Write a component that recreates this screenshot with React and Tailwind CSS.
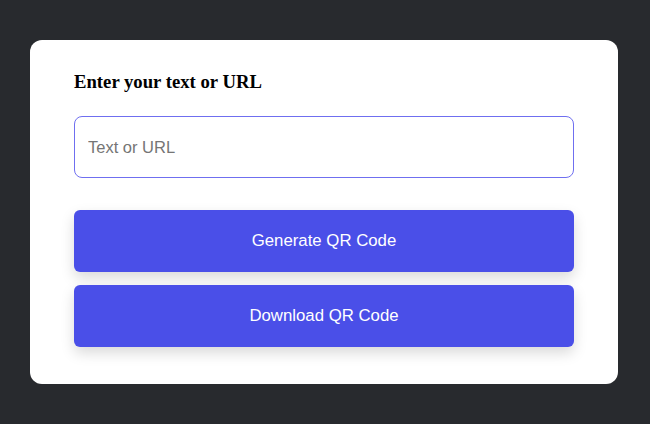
export default function App() {
  return (
    <div className="w-[650px] h-[424px] bg-[#282a2e] pt-[40px] pl-[30px]">
      <div className="w-[588px] h-[344px] bg-white rounded-[12px] px-[44px] pt-[30px]">
        <h2 className="text-[18.7px] leading-[24px] font-bold text-black mt-[0px]" style={{ fontFamily: '"Liberation Serif", serif' }}>
          Enter your text or URL
        </h2>
        <input
          type="text"
          placeholder="Text or URL"
          className="mt-[22px] w-[500px] h-[62px] border border-[#6f6ff0] rounded-[8px] px-[13px] text-[16.5px] text-black placeholder:text-[#757575] outline-none"
          style={{ fontFamily: '"Liberation Sans", Arial, sans-serif' }}
        />
        <div className="mt-[32px] flex flex-col gap-[13px]" style={{ fontFamily: '"Liberation Sans", Arial, sans-serif' }}>
          <button className="w-[500px] h-[62px] bg-[#4a4fe8] text-white text-[16.8px] rounded-[6px] shadow-[0_6px_14px_rgba(0,0,0,0.15)]">
            Generate QR Code
          </button>
          <button className="w-[500px] h-[62px] bg-[#4a4fe8] text-white text-[16.8px] rounded-[6px] shadow-[0_6px_14px_rgba(0,0,0,0.15)]">
            Download QR Code
          </button>
        </div>
      </div>
    </div>
  );
}
